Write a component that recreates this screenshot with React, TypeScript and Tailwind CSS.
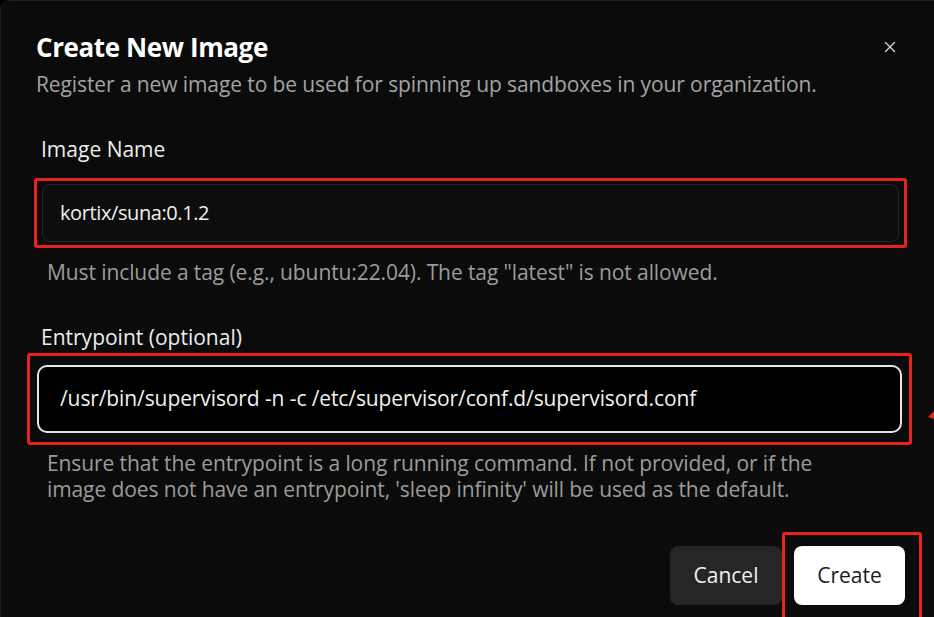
import { X } from "lucide-react";

export default function App() {
  return (
    <div
      className="relative h-[617px] w-[934px] overflow-hidden bg-black text-white"
      style={{ fontFamily: '"Open Sans", "Noto Sans", sans-serif' }}
    >
      <div className="h-[660px] w-[980px] rounded-tl-[10px] border border-[#1f1f1f] bg-[#0b0b0b]">
        <div className="w-[934px] pl-[35px] pr-[30px] pt-[28px]">
          <div className="flex items-start justify-between">
            <div>
              <h2 className="text-[26px] font-bold leading-[36px] tracking-[-0.4px] text-white">
                Create New Image
              </h2>
              <p className="mt-[5px] text-[21px] leading-[28px] tracking-[-0.1px] text-[#a3a3a3]">
                Register a new image to be used for spinning up sandboxes in your organization.
              </p>
            </div>
            <button className="mr-[6px] mt-[9px] text-[#d4d4d4]">
              <X className="h-[18px] w-[18px]" strokeWidth={1.8} />
            </button>
          </div>

          <div className="mt-[37px]">
            <label className="ml-[5px] block text-[21px] leading-[28px] text-[#ededed]">Image Name</label>
            <div className="ml-[-2px] mt-[15px] w-[873px] rounded-[3px] border-[3px] border-[#e8231b] px-[5px] py-[3px]">
              <div className="flex h-[58px] items-center rounded-[8px] border border-[#262626] bg-[#0d0d0d] pl-[17px] text-[20px] tracking-[-0.4px] text-[#f0f0f0]">
                kortix/suna:0.1.2
              </div>
            </div>
            <p className="ml-[11px] mt-[10px] text-[21px] leading-[28px] tracking-[-0.1px] text-[#9c9c9c]">
              Must include a tag (e.g., ubuntu:22.04). The tag "latest" is not allowed.
            </p>
          </div>

          <div className="mt-[37px]">
            <label className="ml-[5px] block text-[21px] leading-[28px] text-[#ededed]">
              Entrypoint (optional)
            </label>
            <div className="ml-[-9px] mt-[2px] w-[885px] rounded-[3px] border-[3px] border-[#e8231b] px-[7px] py-[9px]">
              <div className="flex h-[68px] items-center rounded-[10px] border-[2px] border-[#e5e5e5] bg-black pl-[21px] text-[21px] tracking-[-0.1px] text-[#f0f0f0]">
                /usr/bin/supervisord -n -c /etc/supervisor/conf.d/supervisord.conf
              </div>
            </div>
            <p className="ml-[11px] mt-[5px] w-[800px] text-[21px] leading-[26px] tracking-[-0.1px] text-[#9c9c9c]">
              Ensure that the entrypoint is a long running command. If not provided, or if the image does not
              have an entrypoint, 'sleep infinity' will be used as the default.
            </p>
          </div>

          <div className="mt-[30px] flex items-start justify-end">
            <button className="mt-[14px] h-[59px] w-[112px] rounded-[8px] bg-[#262626] text-[21px] text-[#f0f0f0]">
              Cancel
            </button>
            <div className="mr-[-17px] h-[100px] w-[140px] rounded-[3px] border-[3px] border-[#e8231b] px-[9px] pt-[11px]">
              <button className="h-[59px] w-[111px] rounded-[8px] bg-white text-[21px] text-[#1a1a1a]">
                Create
              </button>
            </div>
          </div>
        </div>
      </div>
      <svg className="absolute left-[926px] top-[409px]" width="8" height="12" viewBox="0 0 8 12">
        <path d="M8 2 L2 8 L8 10 Z" fill="#e8231b" />
      </svg>
    </div>
  );
}
